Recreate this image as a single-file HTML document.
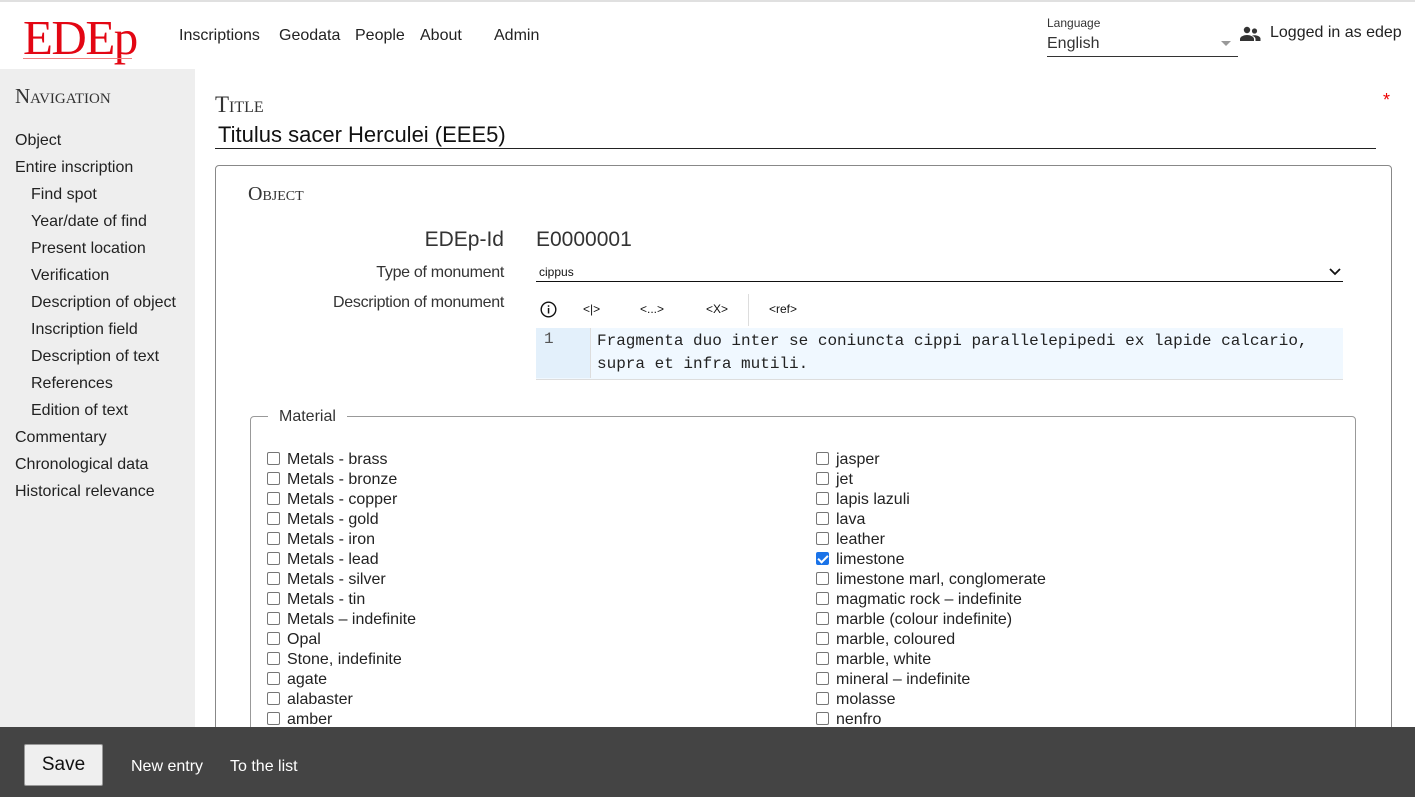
<!DOCTYPE html>
<html><head><meta charset="utf-8"><style>
*{box-sizing:border-box;margin:0;padding:0}
body{width:1415px;height:797px;overflow:hidden;background:#fff;font-family:"Liberation Sans",sans-serif;color:#222;position:relative}
.a{position:absolute;white-space:nowrap}
.sc{font-family:"Liberation Serif",serif;font-variant:small-caps;color:#333}
.nav a{position:absolute;left:0;font-size:16px;color:#222;text-decoration:none}
.cb{position:absolute;font-size:16px;color:#222;line-height:20px}
.cb i{display:inline-block;width:13px;height:13px;border:1px solid #767676;border-radius:2px;vertical-align:-1px;margin-right:7px;background:#fff}
.cb i.on{background:#1a73e8;border-color:#1a73e8;position:relative}
.cb i.on:after{content:"";position:absolute;left:3px;top:0px;width:4px;height:8px;border:solid #fff;border-width:0 2px 2px 0;transform:rotate(45deg)}
</style></head><body>
<div class="a" style="left:0;top:0;width:1415px;height:2px;background:#e0e0e0"></div>
<div class="a" style="left:23px;top:9px;font-family:'Liberation Serif',serif;font-size:49px;color:#e30613;letter-spacing:-1.5px">EDEp</div>
<div class="a" style="left:23px;top:58px;width:109px;height:1px;background:#f08080"></div>
<div class="a" style="left:179px;top:27px;font-size:16px;color:#222">Inscriptions</div>
<div class="a" style="left:279px;top:27px;font-size:16px;color:#222">Geodata</div>
<div class="a" style="left:355px;top:27px;font-size:16px;color:#222">People</div>
<div class="a" style="left:420px;top:27px;font-size:16px;color:#222">About</div>
<div class="a" style="left:494px;top:27px;font-size:16px;color:#222">Admin</div>
<div class="a" style="left:1047px;top:16px;font-size:12px;color:#333">Language</div>
<div class="a" style="left:1047px;top:35px;font-size:16px;color:#333">English</div>
<div class="a" style="left:1221px;top:41px;width:0;height:0;border-left:5px solid transparent;border-right:5px solid transparent;border-top:5px solid #999"></div>
<div class="a" style="left:1047px;top:56px;width:191px;height:1px;background:#333"></div>
<svg class="a" style="left:1240px;top:26px" width="21" height="16" viewBox="0 0 21 16"><circle cx="7" cy="4" r="3.2" fill="#333"/><circle cx="14.5" cy="5" r="2.6" fill="#333"/><path d="M0 15v-2c0-2.5 4-4 7-4s7 1.5 7 4v2z" fill="#333"/><path d="M12 9.6c1-.3 2-.4 2.5-.4 2.5 0 6 1.2 6 3.4V15h-5v-2c0-1.4-1.3-2.6-3.5-3.4z" fill="#333"/></svg>
<div class="a" style="left:1270px;top:24px;font-size:16px;color:#222">Logged in as edep</div>

<div class="a" style="left:0;top:69px;width:195px;height:658px;background:#eeeeee"></div>
<div class="a sc" style="left:15px;top:84px;font-size:21px">Navigation</div>
<div class="nav">
<a style="top:132px;left:15px">Object</a>
<a style="top:159px;left:15px">Entire inscription</a>
<a style="top:186px;left:31px">Find spot</a>
<a style="top:213px;left:31px">Year/date of find</a>
<a style="top:240px;left:31px">Present location</a>
<a style="top:267px;left:31px">Verification</a>
<a style="top:294px;left:31px">Description of object</a>
<a style="top:321px;left:31px">Inscription field</a>
<a style="top:348px;left:31px">Description of text</a>
<a style="top:375px;left:31px">References</a>
<a style="top:402px;left:31px">Edition of text</a>
<a style="top:429px;left:15px">Commentary</a>
<a style="top:456px;left:15px">Chronological data</a>
<a style="top:483px;left:15px">Historical relevance</a>
</div>

<div class="a sc" style="left:215px;top:92px;font-size:23px">Title</div>
<div class="a" style="left:1383px;top:90px;color:#e00;font-size:18px">*</div>
<div class="a" style="left:218px;top:122px;font-size:22px;color:#111">Titulus sacer Herculei (EEE5)</div>
<div class="a" style="left:215px;top:148px;width:1161px;height:1px;background:#222"></div>

<div class="a" style="left:215px;top:165px;width:1177px;height:600px;border:1px solid #888;border-radius:4px"></div>
<div class="a sc" style="left:248px;top:183px;font-size:20px">Object</div>
<div class="a" style="right:911px;top:228px;font-size:21px;color:#333">EDEp-Id</div>
<div class="a" style="left:536px;top:228px;font-size:21px;color:#333">E0000001</div>
<div class="a" style="right:911px;top:264px;font-size:16px;color:#333;letter-spacing:-0.3px">Type of monument</div>
<div class="a" style="left:539px;top:265px;font-size:12px;color:#111">cippus</div>
<svg class="a" style="left:1329px;top:268px" width="12" height="8"><path d="M1 1l5 5 5-5" stroke="#111" stroke-width="1.8" fill="none"/></svg>
<div class="a" style="left:536px;top:281px;width:807px;height:1px;background:#111"></div>
<div class="a" style="right:911px;top:294px;font-size:16px;color:#333;letter-spacing:-0.3px">Description of monument</div>
<svg class="a" style="left:540px;top:301px" width="17" height="17"><circle cx="8.5" cy="8.5" r="7.3" stroke="#111" stroke-width="1.4" fill="none"/><rect x="7.8" y="7" width="1.5" height="5.5" fill="#111"/><rect x="7.8" y="4.3" width="1.5" height="1.5" fill="#111"/></svg>
<div class="a" style="left:583px;top:302px;font-size:12px;color:#111">&lt;|&gt;</div>
<div class="a" style="left:640px;top:302px;font-size:12px;color:#111">&lt;...&gt;</div>
<div class="a" style="left:706px;top:302px;font-size:12px;color:#111">&lt;X&gt;</div>
<div class="a" style="left:748px;top:294px;width:1px;height:32px;background:#ddd"></div>
<div class="a" style="left:769px;top:302px;font-size:12px;color:#111">&lt;ref&gt;</div>
<div class="a" style="left:536px;top:328px;width:807px;height:52px;background:#f0f8ff;border-bottom:1px solid #ddd"></div>
<div class="a" style="left:536px;top:328px;width:55px;height:50px;background:#e3f0fb;border-right:1px solid #ddd"></div>
<div class="a" style="left:544px;top:330px;font-family:'Liberation Mono',monospace;font-size:16px;color:#555">1</div>
<div class="a" style="left:597px;top:330px;font-family:'Liberation Mono',monospace;font-size:16px;line-height:23px;color:#222">Fragmenta duo inter se coniuncta cippi parallelepipedi ex lapide calcario,<br>supra et infra mutili.</div>

<div class="a" style="left:250px;top:416px;width:1106px;height:360px;border:1px solid #999;border-radius:4px"></div>
<div class="a" style="left:268px;top:408px;background:#fff;padding:0 11px;font-size:16px;color:#333">Material</div>

<div class="cb" style="left:267px;top:450px"><i></i>Metals - brass<br><i></i>Metals - bronze<br><i></i>Metals - copper<br><i></i>Metals - gold<br><i></i>Metals - iron<br><i></i>Metals - lead<br><i></i>Metals - silver<br><i></i>Metals - tin<br><i></i>Metals – indefinite<br><i></i>Opal<br><i></i>Stone, indefinite<br><i></i>agate<br><i></i>alabaster<br><i></i>amber</div>
<div class="cb" style="left:816px;top:450px"><i></i>jasper<br><i></i>jet<br><i></i>lapis lazuli<br><i></i>lava<br><i></i>leather<br><i class="on"></i>limestone<br><i></i>limestone marl, conglomerate<br><i></i>magmatic rock – indefinite<br><i></i>marble (colour indefinite)<br><i></i>marble, coloured<br><i></i>marble, white<br><i></i>mineral – indefinite<br><i></i>molasse<br><i></i>nenfro</div>

<div class="a" style="left:0;top:727px;width:1415px;height:70px;background:#444"></div>
<div class="a" style="left:24px;top:744px;width:79px;height:42px;background:#efefef;border:1px solid #999;border-radius:2px;font-size:19px;color:#111;text-align:center;line-height:40px">Save</div>
<div class="a" style="left:131px;top:758px;font-size:16px;color:#fff">New entry</div>
<div class="a" style="left:230px;top:758px;font-size:16px;color:#fff">To the list</div>
</body></html>
